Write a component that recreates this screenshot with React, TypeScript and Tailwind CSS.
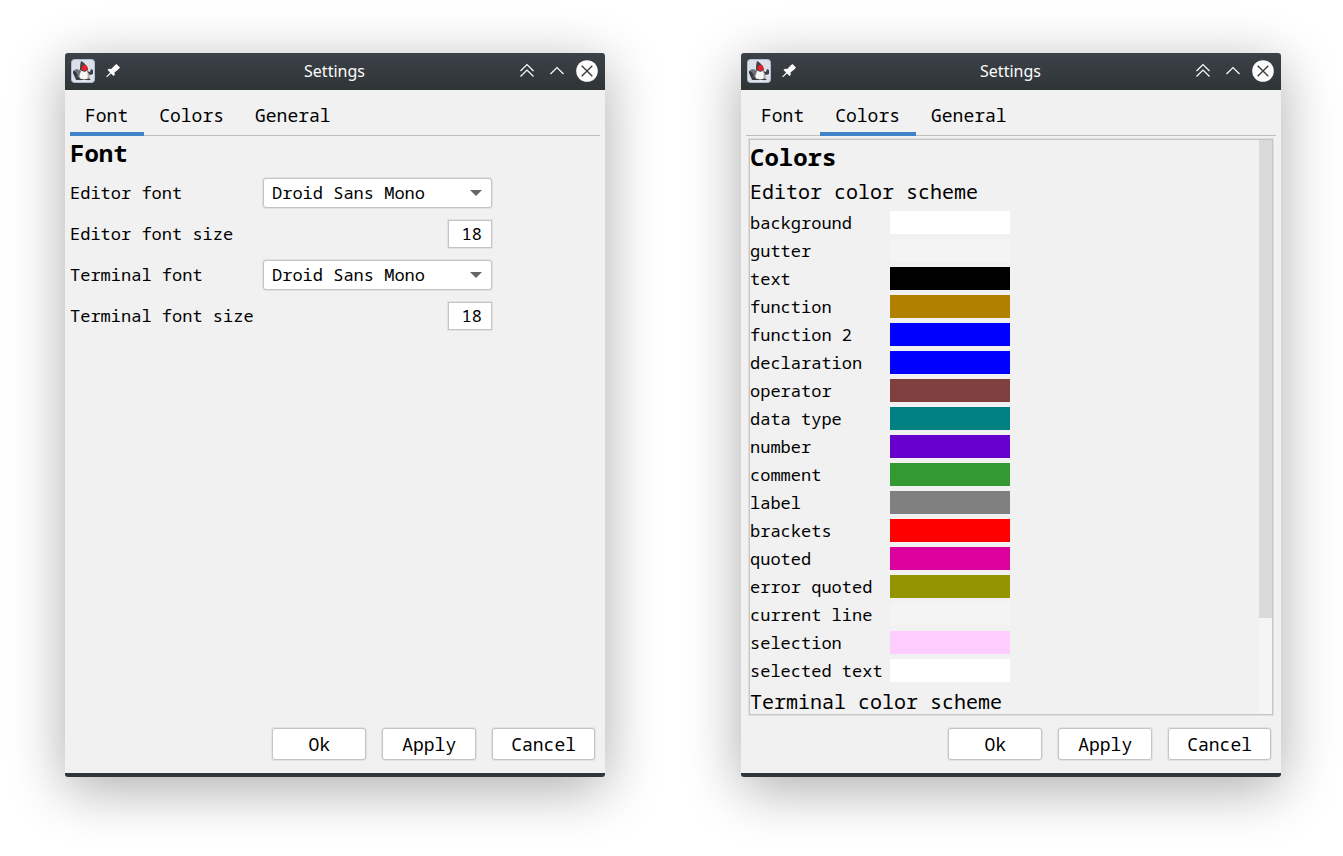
import { useId, useState } from "react";
import type { ReactNode } from "react";

const tabs = ["Font", "Colors", "General"];

const editorColors = [
  { name: "background", value: "#ffffff" },
  { name: "gutter", value: "#f4f4f4" },
  { name: "text", value: "#000000" },
  { name: "function", value: "#b08000" },
  { name: "function 2", value: "#0000ff" },
  { name: "declaration", value: "#0000ff" },
  { name: "operator", value: "#804040" },
  { name: "data type", value: "#008080" },
  { name: "number", value: "#6600cc" },
  { name: "comment", value: "#339933" },
  { name: "label", value: "#808080" },
  { name: "brackets", value: "#ff0000" },
  { name: "quoted", value: "#dc009c" },
  { name: "error quoted", value: "#949400" },
  { name: "current line", value: "#f4f4f4" },
  { name: "selection", value: "#ffccff" },
  { name: "selected text", value: "#ffffff" },
];

function DukeIcon() {
  return (
    <svg className="size-6" viewBox="0 0 24 24" aria-hidden="true">
      <rect x="0.5" y="0.5" width="23" height="23" rx="3" fill="#dde0e8" stroke="#a9c0d4" />
      <path d="M2 12l3-2 4 1 2 3-1 4-6 1z" fill="#6c757e" />
      <path d="M2 12l3 1 2 4-3 1-2-4z" fill="#33383d" />
      <path d="M16 12l3 1 1-3 2 1v4l-3 1-3-1z" fill="#3c3f43" />
      <path d="M8 20c0-3 1-6 3-9l5 1c2 3 3 6 3 9-3 1-8 1-11-1z" fill="#f6f6f4" />
      <path d="M16 12c2 3 3 6 3 9l-3 .5c1-3 1-6 0-9.500z" fill="#a9a9a6" />
      <path d="M10 2c-1 3-1 6-1 9l2 1c2 1 4 1 6-1 0-3-3-7-7-9z" fill="#444448" />
      <circle cx="13.500" cy="9" r="2.900" fill="#e3202b" />
      <path d="M4 18l4-.500 1 2 4 1 5-1 2 1.500H5z" fill="#3c3e41" />
    </svg>
  );
}

function PinIcon() {
  return (
    <svg className="size-4" viewBox="0 0 16 16" fill="#fcfcfc" aria-hidden="true">
      <path d="M11.500 1l3.500 3.500-1.500 1.800-4 3.200.3 2.200-1.300 1.300-2.500-2.500-4 3.800-.7-.7 3.800-4L2.500 7l1.300-1.300 2.400.3 3.400-3.600z" />
    </svg>
  );
}

function TitleBar() {
  return (
    <header className="flex h-[37px] items-center rounded-t-[3px] bg-linear-to-b from-[#3d4249] to-[#2f3437] pr-[7px] pb-[2px] pl-[6px] text-[#fcfcfc]">
      <div className="flex flex-1 items-center gap-[10px]">
        <DukeIcon />
        <button type="button" aria-label="Pin window">
          <PinIcon />
        </button>
      </div>
      <h1 className="font-['Noto_Sans',sans-serif] text-base">Settings</h1>
      <div className="flex flex-1 items-center justify-end gap-2">
        <button type="button" aria-label="Keep above">
          <svg className="size-[22px]" viewBox="0 0 22 22" fill="none" stroke="currentColor" strokeWidth="1.200">
            <path d="M4.500 11l6.500-6.500 6.500 6.500M4.500 16.500l6.500-6.500 6.500 6.500" />
          </svg>
        </button>
        <button type="button" aria-label="Maximize">
          <svg className="size-[22px]" viewBox="0 0 22 22" fill="none" stroke="currentColor" strokeWidth="1.200">
            <path d="M4.500 14l6.500-6.500 6.500 6.500" />
          </svg>
        </button>
        <button type="button" aria-label="Close">
          <svg className="size-[22px]" viewBox="0 0 22 22" fill="none">
            <circle cx="11" cy="11" r="10.800" fill="#fcfcfc" />
            <path d="M5.700 5.700l10.600 10.600M16.300 5.700L5.700 16.300" stroke="#31363b" strokeWidth="1.300" />
          </svg>
        </button>
      </div>
    </header>
  );
}

function DialogButton({ children }: { children: ReactNode }) {
  return (
    <button
      type="button"
      className="h-8 min-w-[94px] rounded-[3px] border border-[#c4c4c4] bg-white px-[18px] text-lg leading-6 ring-1 ring-[#e2e2e2]"
    >
      {children}
    </button>
  );
}

function FontSelect({ label }: { label: string }) {
  const id = useId();
  return (
    <div className="flex h-[41px] items-center">
      <label htmlFor={id} className="w-[193px]">
        {label}
      </label>
      <div className="relative">
        <select
          id={id}
          className="block h-[30px] w-[229px] appearance-none rounded-[3px] border border-[#c4c4c4] bg-white px-2 ring-1 ring-[#e2e2e2]"
        >
          <option>Droid Sans Mono</option>
        </select>
        <svg
          className="pointer-events-none absolute top-3 right-[10px] h-[6px] w-3"
          viewBox="0 0 12 6"
          fill="#666"
        >
          <path d="M0 0h12L6 6z" />
        </svg>
      </div>
    </div>
  );
}

function SizeInput({ label }: { label: string }) {
  const id = useId();
  return (
    <div className="flex h-[41px] w-[422px] items-center justify-between">
      <label htmlFor={id}>{label}</label>
      <input
        id={id}
        type="text"
        defaultValue="18"
        className="h-7 w-11 border border-[#c4c4c4] bg-white px-[9px] text-right ring-1 ring-[#e2e2e2]"
      />
    </div>
  );
}

function FontPanel() {
  return (
    <section className="px-[5px]">
      <h2 className="pb-[2px] text-2xl leading-[34px] font-bold">Font</h2>
      <FontSelect label="Editor font" />
      <SizeInput label="Editor font size" />
      <FontSelect label="Terminal font" />
      <SizeInput label="Terminal font size" />
    </section>
  );
}

function ColorRow({ name, value }: { name: string; value: string }) {
  const id = useId();
  return (
    <div className="flex h-7 items-center pb-px">
      <label htmlFor={id} className="w-[140px]">
        {name}
      </label>
      <input
        id={id}
        type="color"
        defaultValue={value}
        className="h-[23px] w-[120px] appearance-none border-0 p-0 [&::-webkit-color-swatch]:rounded-none [&::-webkit-color-swatch]:border-0 [&::-webkit-color-swatch-wrapper]:p-0"
      />
    </div>
  );
}

function ColorsPanel() {
  return (
    <section className="mx-2 mt-[3px] flex border border-[#c6c6c6] ring-1 ring-[#dedede]">
      <div className="flex-1">
        <h2 className="text-2xl leading-[34px] font-bold">Colors</h2>
        <h3 className="pt-px text-xl leading-[34px]">Editor color scheme</h3>
        {editorColors.map((color) => (
          <ColorRow key={color.name} name={color.name} value={color.value} />
        ))}
        <h3 className="pt-[5px] text-xl leading-6">Terminal color scheme</h3>
      </div>
      {/* Scrollbar */}
      <div className="w-[13px] bg-[#f5f5f5]">
        <div className="h-5/6 bg-[#dadada]" />
      </div>
    </section>
  );
}

function SettingsWindow({ initialTab }: { initialTab: string }) {
  const [activeTab, setActiveTab] = useState(initialTab);

  return (
    <div className="flex flex-col rounded-[3px] border-b-4 border-[#2f3639] bg-[#f1f1f1] shadow-[0_12px_56px_rgba(0,0,0,0.33)]">
      <TitleBar />
      {/* Tabs */}
      <nav className="mx-[5px] flex h-[46px] items-end border-b border-[#bdbdbd]">
        {tabs.map((tab) => (
          <button
            key={tab}
            type="button"
            onClick={() => setActiveTab(tab)}
            className={
              tab === activeTab
                ? "-mb-px border-b-4 border-[#4083c9] pr-4 pb-[2px] pl-[15px] text-lg leading-[30px]"
                : "-mb-px border-b-4 border-transparent pr-4 pb-[2px] pl-[15px] text-lg leading-[30px]"
            }
          >
            {tab}
          </button>
        ))}
      </nav>
      <div className="flex-1">
        {activeTab === "Font" && <FontPanel />}
        {activeTab === "Colors" && <ColorsPanel />}
      </div>
      <div className="flex justify-end gap-4 px-[10px] py-[13px]">
        <DialogButton>Ok</DialogButton>
        <DialogButton>Apply</DialogButton>
        <DialogButton>Cancel</DialogButton>
      </div>
    </div>
  );
}

function App() {
  return (
    <main className="grid min-h-screen grid-cols-2 content-start gap-[136px] bg-white pt-[53px] pr-[62px] pb-16 pl-[65px] font-['Noto_Sans_Mono','Droid_Sans_Mono','DejaVu_Sans_Mono',monospace] text-[17px] text-black">
      <SettingsWindow initialTab="Font" />
      <SettingsWindow initialTab="Colors" />
    </main>
  );
}

export default App;
